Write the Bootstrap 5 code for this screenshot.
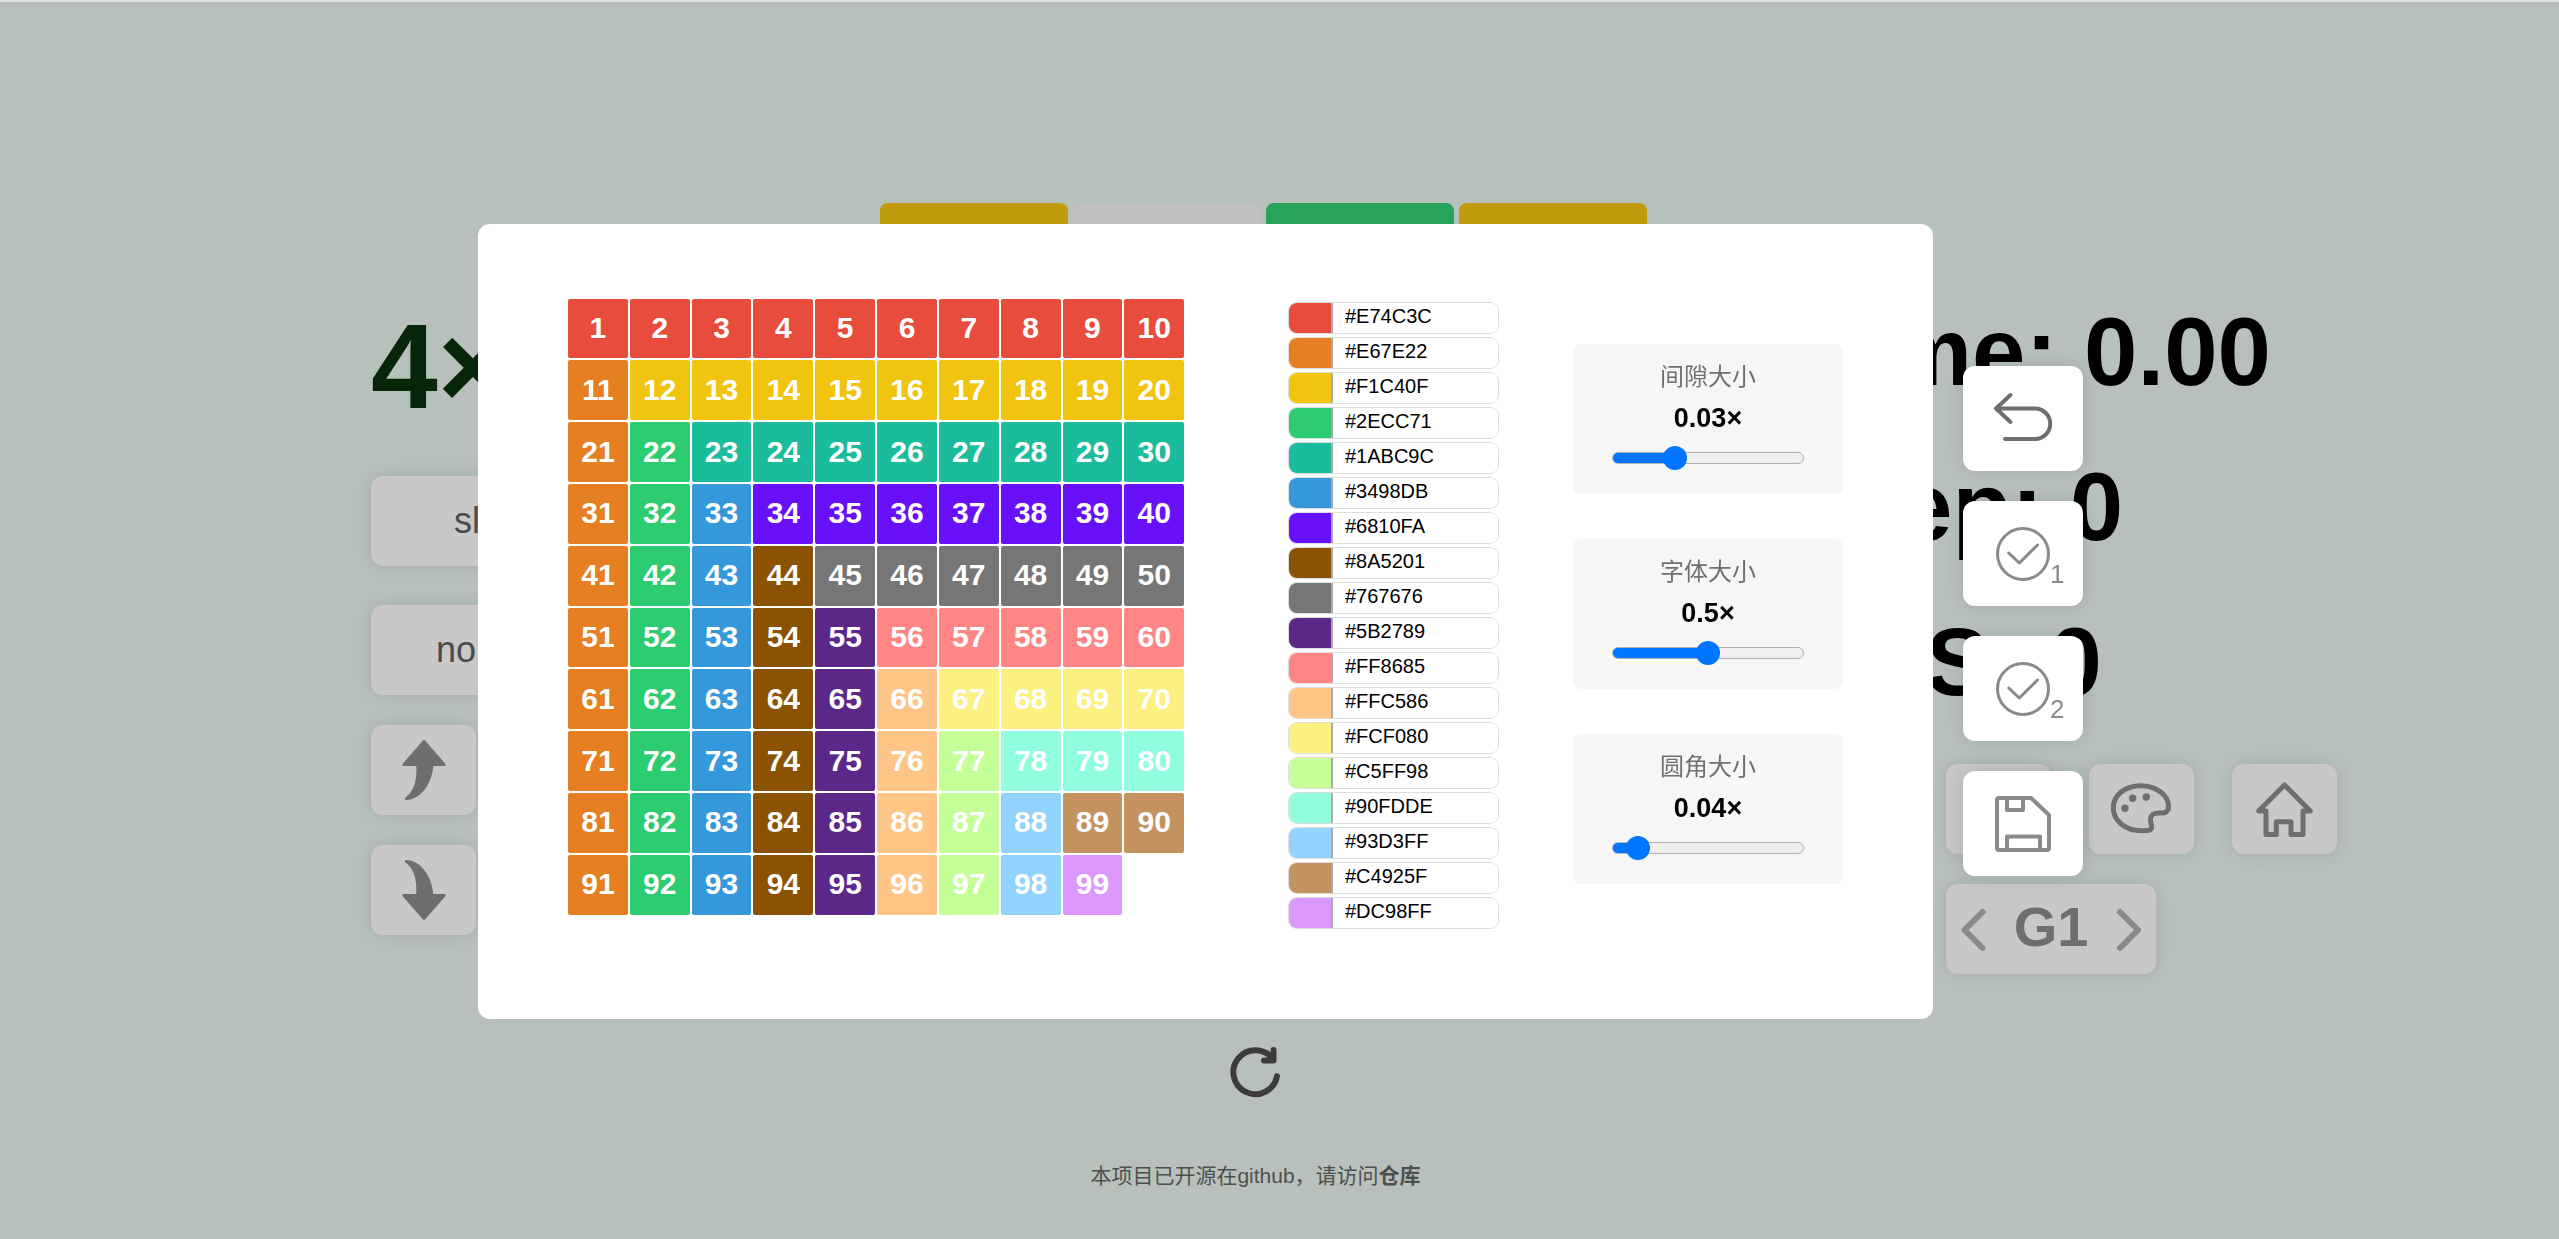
<!DOCTYPE html>
<html lang="zh-CN">
<head>
<meta charset="utf-8">
<meta name="viewport" content="width=device-width, initial-scale=1">
<title>4×4</title>
<link rel="stylesheet" href="https://cdn.jsdelivr.net/npm/bootstrap@5.3.0/dist/css/bootstrap.min.css">
<style>
body{background:#b8c0bb;font-family:"Liberation Sans","Noto Sans CJK SC",sans-serif;color:#000;overflow:hidden}
.stage{min-height:100vh;border-top:2px solid #dbe0dd}
.columns{display:grid;grid-template-columns:880fr 767fr 912fr;height:1032px}
.left-side{padding:304px 0 0 14.5vw}
.right-side{padding:272px 0 0 6.1vw}
.game-title{font-size:120px;line-height:120px;font-weight:700;color:#072508;margin:0 0 50px;white-space:nowrap}
.stat{font-size:96px;line-height:155px;font-weight:700;white-space:nowrap}
.tile-btn{border:0;border-radius:12px;background:#c8c8c8;color:#4b4b4b;box-shadow:0 0 18px rgba(0,0,0,.1);height:90px;width:105px;padding:0;font-size:36px;display:flex;align-items:center;justify-content:center}
.tile-btn.wide{width:240px}
.tile-btn svg,.tool-btn svg{display:block;width:100%;height:100%}
.mode-list{display:flex;flex-direction:column;gap:30px}
.mode-list .wide:first-child{margin-bottom:9px}
.icon-row{display:flex;gap:38px;padding-left:143px;margin:25px 0 30px;margin-left:-143px}
.group-picker{width:210px;height:90px;border-radius:12px;background:#c8c8c8;box-shadow:0 0 18px rgba(0,0,0,.1);display:flex;align-items:center;justify-content:space-between}
.icon-row,.group-picker{margin-left:143px;padding-left:0}
.group-picker button{border:0;background:none;padding:0;width:54px;height:90px}
.group-picker b{font-size:56px;line-height:86px;height:90px;color:#6e6e6e}
.board{display:grid;grid-template-columns:repeat(4,1fr);gap:5px;padding-top:201px;align-content:start}
.cell{aspect-ratio:1;border-radius:8px;background:#c0c0c0}
.cell.gold{background:#c09b0c}.cell.green{background:#27a35a}
.reload{border:0;background:none;padding:0;width:60px;height:60px;margin:8px 0 59px}
.foot-note{font-size:21px;line-height:30px;color:#4d504e;margin:0}
.foot-note a{color:inherit;text-decoration:none;font-weight:700}
.overlay-layer{position:fixed;inset:3px 0 0 2px;display:flex;align-items:center;justify-content:center;gap:30px}
.theme-dialog{width:1455px;background:#fff;border-radius:12px;padding:75px 90px 90px;display:flex;align-items:flex-start;gap:74px}
.number-grid{display:grid;grid-template-columns:repeat(10,1fr);gap:2px;width:616px;flex:none;margin-right:30px}
.number-grid span{aspect-ratio:1;border-radius:2px;color:#fff;font-weight:700;font-size:30px;display:flex;align-items:center;justify-content:center;padding-bottom:2px}
.swatches{width:211px;flex:none;padding-top:3px;display:flex;flex-direction:column;gap:3px}
.swatch-row{display:flex;height:32px;border:1px solid #dedede;border-radius:9px;overflow:hidden}
.swatch-row input[type=color]{appearance:none;border:0;padding:0;width:42px;height:100%;flex:none}
.swatch-row input::-webkit-color-swatch-wrapper{padding:0}
.swatch-row input::-webkit-color-swatch{border:0;border-radius:0}
.swatch-row input[type=text]{border:0;border-left:2px solid #aaa;width:100%;min-width:0;padding:0 0 4px 12px;font-size:20px;color:#000;background:#fff}
.sliders{flex:1;padding-top:45px;display:flex;flex-direction:column;gap:45px}
.slider-box{height:150px;background:#f6f6f6;border-radius:8px;display:flex;flex-direction:column;align-items:center;padding-top:15px}
.slider-box label{font-size:24px;line-height:36px;color:#707070}
.slider-box output{font-size:27px;line-height:46px;font-weight:700}
.slider-box input{appearance:none;width:192px;height:24px;background:none;margin:5px 0 0}
.slider-box input::-webkit-slider-runnable-track{height:12px;border:1px solid #b2b2b2;border-radius:6px;background:linear-gradient(90deg,#0075ff var(--fill),#efefef var(--fill))}
.slider-box input::-webkit-slider-thumb{appearance:none;width:24px;height:24px;border-radius:50%;background:#0075ff;margin-top:-7px}
.tools{display:flex;flex-direction:column;gap:30px}
.tool-btn{width:120px;height:105px;border:0;border-radius:12px;background:#fff;padding:0;box-shadow:0 0 18px rgba(0,0,0,.12)}
.line{fill:none;stroke-linecap:round;stroke-linejoin:round}
.dark{stroke:#6e6e6e;stroke-width:5}
.soft{stroke:#8a8a8a;stroke-width:3}
</style>
<script src="https://cdn.jsdelivr.net/npm/bootstrap@5.3.0/dist/js/bootstrap.bundle.min.js"></script>
</head>
<body>
<main class="stage">
  <div class="columns">
    <section class="left-side">
      <h1 class="game-title">4×4</h1>
      <div class="mode-list">
        <button class="tile-btn wide">slide</button>
        <button class="tile-btn wide">normal</button>
        <button class="tile-btn" aria-label="上一个"><svg viewBox="0 0 105 90"><path fill="#6e6e6e" d="M51.500 16Q53 14 54.500 16L74.500 39Q75.500 41 73 41H62.300C61 58 50 75 35 75Q33 74 34.500 72.500C43 66 46 56 45.300 41H33Q30.500 41 31.500 39Z"/></svg></button>
        <button class="tile-btn" aria-label="下一个"><svg viewBox="0 0 105 90"><path fill="#6e6e6e" transform="matrix(1 0 0 -1 0 90)" d="M51.500 16Q53 14 54.500 16L74.500 39Q75.500 41 73 41H62.300C61 58 50 75 35 75Q33 74 34.500 72.500C43 66 46 56 45.300 41H33Q30.500 41 31.500 39Z"/></svg></button>
      </div>
    </section>
    <section class="board">
      <div class="cell gold"></div><div class="cell"></div><div class="cell green"></div><div class="cell gold"></div>
    </section>
    <section class="right-side">
      <div class="stat">Time: 0.00</div>
      <div class="stat">Step: 0</div>
      <div class="stat">TPS: 0</div>
      <div class="icon-row">
        <button class="tile-btn" aria-label="菜单"></button>
        <button class="tile-btn" aria-label="主题"><svg viewBox="0 0 105 90"><path class="line dark" d="M79.500 42.500C79.500 31 67 21.700 52 21.700C36 21.700 24.300 31 24.300 44C24.300 57 37 66.700 52 66.700C58 66.700 62 66.500 62.500 64C63 60 61 58 61.500 54C62.500 50 65 49 70 49C77 49.500 79.500 47 79.500 42.500Z"/><g fill="#6e6e6e"><circle cx="36" cy="44.300" r="3.700"/><circle cx="43.700" cy="34.300" r="3.700"/><circle cx="57.300" cy="33" r="3.700"/></g></svg></button>
        <button class="tile-btn" aria-label="主页"><svg viewBox="0 0 105 90"><path class="line dark" d="M52.500 21L26.700 47H34V70.500H44.300V57.700H59V70.500H71V47H78.300Z"/></svg></button>
      </div>
      <div class="group-picker">
        <button aria-label="上一组"><svg viewBox="0 0 54 90"><path class="line" stroke="#8a8a8a" stroke-width="6" d="M36.500 28L18.500 46L36.500 64"/></svg></button>
        <b>G1</b>
        <button aria-label="下一组"><svg viewBox="0 0 54 90"><path class="line" stroke="#8a8a8a" stroke-width="6" d="M18 28L36 46L18 64"/></svg></button>
      </div>
    </section>
  </div>
  <footer class="text-center pe-5">
    <button class="reload" aria-label="重新开始"><svg viewBox="0 0 60 60"><g class="line" stroke="#3c3c3c" stroke-width="6"><path d="M51 34.300A22 22 0 1 1 47 17"/><path d="M47.500 8V18.500H38"/></g></svg></button>
    <p class="foot-note">本项目已开源在github，请访问<a href="#">仓库</a></p>
  </footer>
</main>

<div class="overlay-layer">
  <div class="theme-dialog" role="dialog" aria-label="主题">
    <div class="number-grid" id="numbers"></div>
    <div class="swatches" id="swatches"></div>
    <div class="sliders">
      <div class="slider-box"><label for="gap">间隙大小</label><output for="gap">0.03×</output><input id="gap" type="range" min="0" max="0.1" step="0.01" value="0.03" style="--fill:32%"></div>
      <div class="slider-box"><label for="font">字体大小</label><output for="font">0.5×</output><input id="font" type="range" min="0" max="1" step="0.1" value="0.5" style="--fill:50%"></div>
      <div class="slider-box"><label for="radius">圆角大小</label><output for="radius">0.04×</output><input id="radius" type="range" min="0" max="0.5" step="0.01" value="0.04" style="--fill:13%"></div>
    </div>
  </div>
  <div class="tools">
    <button class="tool-btn" aria-label="返回"><svg viewBox="0 0 120 105"><path class="line" stroke="#6e6e6e" stroke-width="4" d="M47.500 29L33 42.500L47.500 56M33 42.500H72A15 15 0 0 1 72 73H42"/></svg></button>
    <button class="tool-btn" aria-label="应用 1"><svg viewBox="0 0 120 105"><circle class="line soft" cx="60" cy="53" r="25.500"/><path class="line soft" d="M45.700 52L56.300 62L74.500 44"/><text x="87" y="82" font-size="26" fill="#8a8a8a">1</text></svg></button>
    <button class="tool-btn" aria-label="应用 2"><svg viewBox="0 0 120 105"><circle class="line soft" cx="60" cy="53" r="25.500"/><path class="line soft" d="M45.700 52L56.300 62L74.500 44"/><text x="87" y="82" font-size="26" fill="#8a8a8a">2</text></svg></button>
    <button class="tool-btn" aria-label="保存"><svg viewBox="0 0 120 105"><path class="line" stroke="#8a8a8a" stroke-width="4" d="M36 27H68L86 44V77Q86 79 84 79H36Q34 79 34 77V29Q34 27 36 27ZM44 27V39H60V27M44 79V65.500H77V79"/></svg></button>
  </div>
</div>
<script>
const colors = ["#E74C3C","#E67E22","#F1C40F","#2ECC71","#1ABC9C","#3498DB","#6810FA","#8A5201","#767676","#5B2789","#FF8685","#FFC586","#FCF080","#C5FF98","#90FDDE","#93D3FF","#C4925F","#DC98FF"];
// Each layer takes one colour for its row and the next one for its column.
document.getElementById("numbers").innerHTML = Array.from({length: 99}, (_, i) => {
  const r = Math.floor(i / 10), c = i % 10;
  const k = c >= r ? 2 * r : 2 * c + 1;
  return `<span style="background:${colors[Math.min(k, 17)]}">${i + 1}</span>`;
}).join("");
document.getElementById("swatches").innerHTML = colors.map((c, i) =>
  `<div class="swatch-row"><input type="color" value="${c.toLowerCase()}" aria-label="颜色 ${i + 1}"><input type="text" value="${c}" aria-label="色值 ${i + 1}"></div>`).join("");
</script>
</body>
</html>
